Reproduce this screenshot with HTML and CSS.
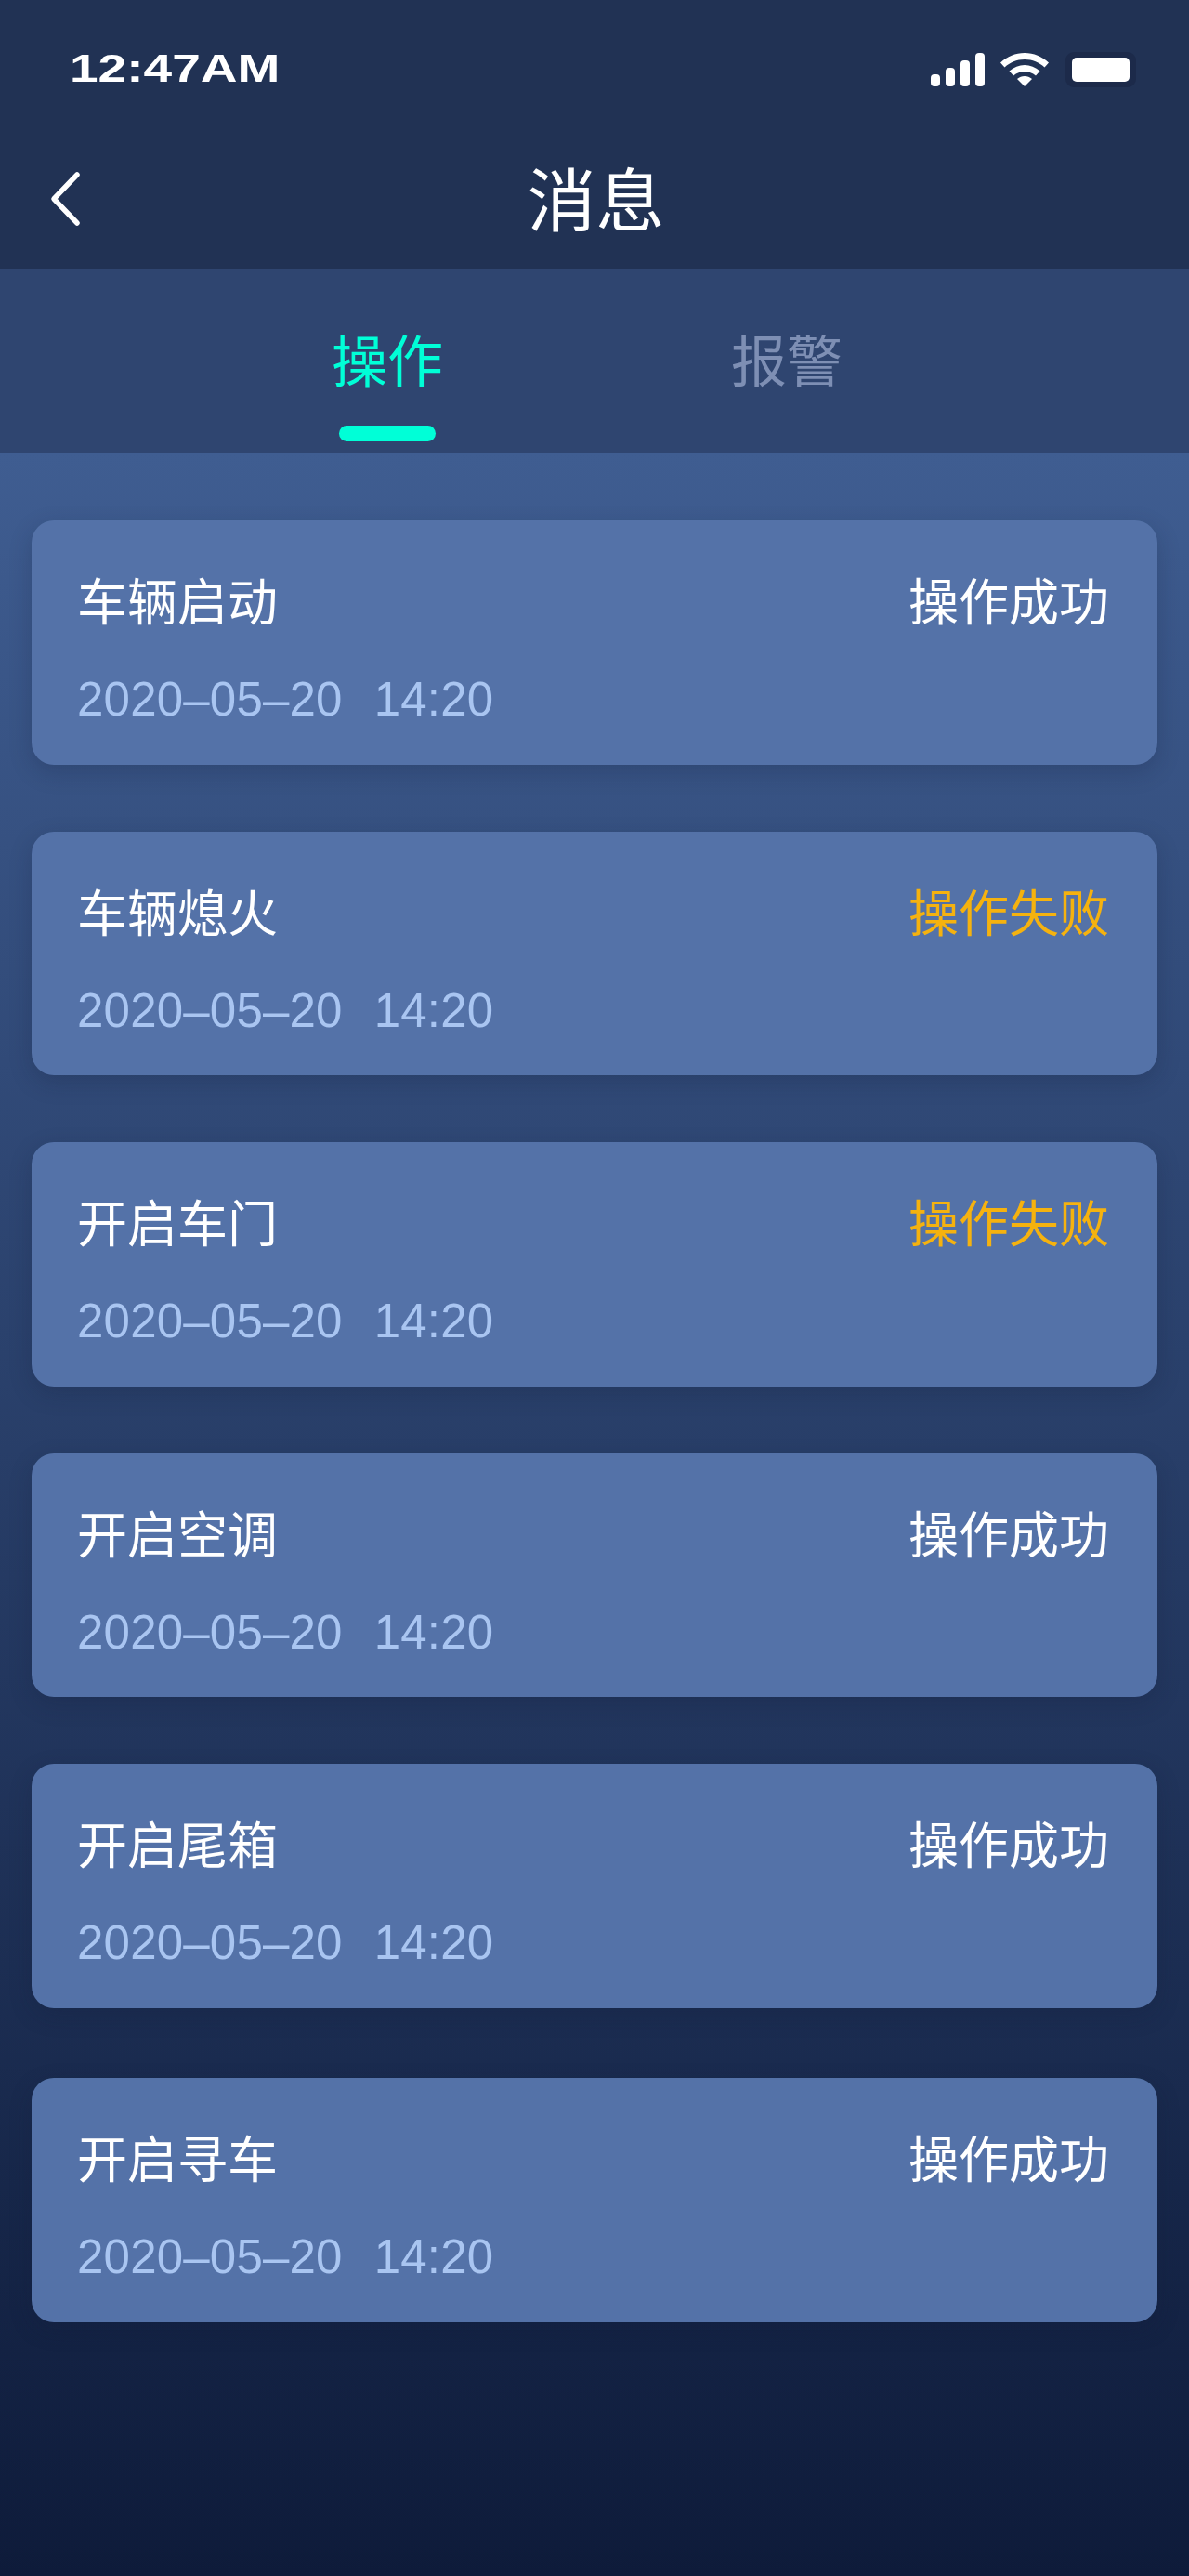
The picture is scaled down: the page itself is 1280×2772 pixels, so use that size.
FILE: index.html
```html
<!DOCTYPE html>
<html lang="zh-CN">
<head>
<meta charset="utf-8">
<title>消息</title>
<link rel="stylesheet" href="styles.css">
</head>
<body>
<div class="app">
  <header class="header">
    <div class="status-bar">
      <span class="clock">12:47AM</span>
      <div class="status-icons">
        <svg class="icon-signal" width="58" height="36" viewBox="0 0 58 36" aria-hidden="true">
          <rect x="0" y="23" width="10" height="13" rx="4"/>
          <rect x="16" y="16" width="10" height="20" rx="4"/>
          <rect x="32" y="8" width="10" height="28" rx="4"/>
          <rect x="48" y="0" width="10" height="36" rx="4"/>
        </svg>
        <svg class="icon-wifi" width="52" height="36" viewBox="0 0 52 36" aria-hidden="true">
          <path d="M26 0C16 0 7.500 3.800 0 10.500L4.500 15.500C10.200 10.200 17.500 7 26 7S41.800 10.200 47.500 15.500L52 10.500C44.500 3.800 36 0 26 0Z"/>
          <path d="M26 13C20 13 14.500 15.300 9.500 19.500L14 24.500C17.500 21.600 21.500 20 26 20S34.500 21.600 38 24.500L42.500 19.500C37.500 15.300 32 13 26 13Z"/>
          <path d="M26 25C23 25 20.500 26 18 28L26 36L34 28C31.500 26 29 25 26 25Z"/>
        </svg>
        <span class="battery"><span class="battery-level"></span></span>
      </div>
    </div>
    <div class="nav-bar">
      <svg class="back" width="36" height="60" viewBox="0 0 36 60" aria-hidden="true">
        <path d="M31 4L6 30L31 56"/>
      </svg>
      <h1 class="page-title">消息</h1>
    </div>
  </header>

  <nav class="tabs">
    <div class="tab tab-active">操作<span class="tab-marker"></span></div>
    <div class="tab">报警</div>
  </nav>

  <main class="list">
    <article class="card">
      <div class="card-row"><span class="card-title">车辆启动</span><span class="card-state">操作成功</span></div>
      <div class="card-time"><span>2020–05–20</span><span>14:20</span></div>
    </article>
    <article class="card">
      <div class="card-row"><span class="card-title">车辆熄火</span><span class="card-state state-failed">操作失败</span></div>
      <div class="card-time"><span>2020–05–20</span><span>14:20</span></div>
    </article>
    <article class="card">
      <div class="card-row"><span class="card-title">开启车门</span><span class="card-state state-failed">操作失败</span></div>
      <div class="card-time"><span>2020–05–20</span><span>14:20</span></div>
    </article>
    <article class="card">
      <div class="card-row"><span class="card-title">开启空调</span><span class="card-state">操作成功</span></div>
      <div class="card-time"><span>2020–05–20</span><span>14:20</span></div>
    </article>
    <article class="card">
      <div class="card-row"><span class="card-title">开启尾箱</span><span class="card-state">操作成功</span></div>
      <div class="card-time"><span>2020–05–20</span><span>14:20</span></div>
    </article>
    <article class="card card-last">
      <div class="card-row"><span class="card-title">开启寻车</span><span class="card-state">操作成功</span></div>
      <div class="card-time"><span>2020–05–20</span><span>14:20</span></div>
    </article>
  </main>
</div>
</body>
</html>
```
FILE: styles.css
```css
* {
  box-sizing: border-box;
}

html,
body {
  margin: 0;
  padding: 0;
}

body {
  font-family: "Noto Sans CJK SC", "Liberation Sans", sans-serif;
  color: #fff;
}

.app {
  display: flex;
  flex-direction: column;
  width: 1280px;
  height: 2772px;
  overflow: hidden;
  background: #0e1b3a;
}

/* Status bar and title */
.header {
  height: 290px;
  background: #213254;
}

.status-bar {
  display: flex;
  align-items: center;
  justify-content: space-between;
  height: 146px;
  padding: 0 63px 0 75px;
}

.clock {
  font-family: "Liberation Sans", sans-serif;
  font-size: 43px;
  font-weight: 700;
  line-height: 1;
  transform: scaleX(1.28);
  transform-origin: left center;
}

.status-icons {
  display: flex;
  align-items: center;
  gap: 17px;
  margin-top: 4px;
}

.status-icons svg {
  display: block;
  fill: #fff;
}

.battery {
  display: block;
  width: 76px;
  height: 38px;
  padding: 6px 7px;
  margin-left: 1px;
  margin-right: -6px;
  border-radius: 9px;
  background: #1c2a4a;
}

.battery-level {
  display: block;
  width: 62px;
  height: 26px;
  border-radius: 5px;
  background: #fff;
}

.nav-bar {
  position: relative;
  display: flex;
  align-items: center;
  justify-content: center;
  height: 144px;
}

.back {
  position: absolute;
  left: 52px;
  top: 38px;
  fill: none;
  stroke: #fff;
  stroke-width: 5.5px;
  stroke-linecap: round;
  stroke-linejoin: round;
}

.page-title {
  margin: 0 0 14px 3px;
  font-size: 74px;
  font-weight: 400;
  line-height: 1.2;
}

/* Tabs */
.tabs {
  display: flex;
  flex-shrink: 0;
  justify-content: center;
  gap: 310px;
  height: 198px;
  padding: 0 16px 0 0;
  background: #2f4570;
}

.tab {
  position: relative;
  padding-top: 52px;
  font-size: 60px;
  line-height: 86px;
  font-weight: 400;
  color: #7e8fb4;
}

.tab-active {
  color: #00ffd7;
}

.tab-marker {
  position: absolute;
  left: 8px;
  right: 8px;
  bottom: 13px;
  height: 17px;
  border-radius: 9px;
  background: #00ffd7;
}

/* Record list */
.list {
  flex: 1;
  padding: 72px 34px 0;
  background: linear-gradient(180deg, #3f5d91 0%, #0e1b3a 100%);
}

.card {
  height: 262.5px;
  margin-bottom: 72px;
  padding: 46px 52px 0 49px;
  border-radius: 24px;
  background: #5472a8;
  box-shadow: 0 8px 24px rgba(16, 26, 56, 0.22);
}

.card:nth-child(5) {
  margin-bottom: 75.5px;
}

.card-row {
  display: flex;
  justify-content: space-between;
  font-size: 54px;
  font-weight: 400;
  line-height: 78px;
}

.state-failed {
  color: #f5b20f;
}

.card-time {
  display: flex;
  gap: 34px;
  margin-top: 40px;
  font-family: "Liberation Sans", sans-serif;
  font-size: 51px;
  letter-spacing: 0.2px;
  line-height: 58px;
  color: #a9c5f1;
}
```
